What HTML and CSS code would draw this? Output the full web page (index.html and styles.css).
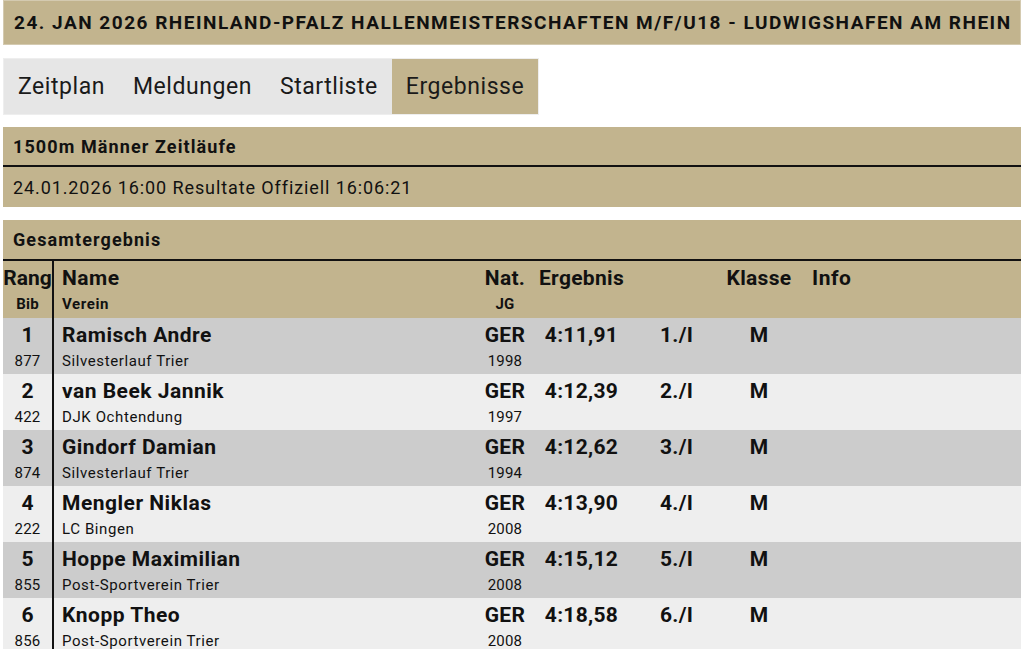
FILE: index.html
```html
<!DOCTYPE html>
<html lang="de">
<head>
<meta charset="utf-8">
<title>Ergebnisse</title>
<link rel="stylesheet" href="styles.css">
</head>
<body>
<div class="page">
  <header class="title">24. JAN 2026 RHEINLAND-PFALZ HALLENMEISTERSCHAFTEN M/F/U18 - LUDWIGSHAFEN AM RHEIN</header>
  <nav class="tabs">
    <a class="tab">Zeitplan</a>
    <a class="tab">Meldungen</a>
    <a class="tab">Startliste</a>
    <a class="tab active">Ergebnisse</a>
  </nav>
  <section class="event">
    <div class="event-name">1500m Männer Zeitläufe</div>
    <div class="event-info">24.01.2026 16:00 Resultate Offiziell 16:06:21</div>
  </section>
  <section class="results">
    <div class="results-title">Gesamtergebnis</div>
    <div class="row head">
      <div class="c rang"><span class="l1">Rang</span><span class="l2">Bib</span></div>
      <div class="c name"><span class="l1">Name</span><span class="l2">Verein</span></div>
      <div class="c nat"><span class="l1">Nat.</span><span class="l2">JG</span></div>
      <div class="c res"><span class="l1">Ergebnis</span></div>
      <div class="c place"></div>
      <div class="c kl"><span class="l1">Klasse</span></div>
      <div class="c info"><span class="l1">Info</span></div>
    </div>
    <div class="row odd">
      <div class="c rang"><span class="l1">1</span><span class="l2">877</span></div>
      <div class="c name"><span class="l1">Ramisch Andre</span><span class="l2">Silvesterlauf Trier</span></div>
      <div class="c nat"><span class="l1">GER</span><span class="l2">1998</span></div>
      <div class="c res"><span class="l1">4:11,91</span></div>
      <div class="c place"><span class="l1">1./I</span></div>
      <div class="c kl"><span class="l1">M</span></div>
      <div class="c info"></div>
    </div>
    <div class="row even">
      <div class="c rang"><span class="l1">2</span><span class="l2">422</span></div>
      <div class="c name"><span class="l1">van Beek Jannik</span><span class="l2">DJK Ochtendung</span></div>
      <div class="c nat"><span class="l1">GER</span><span class="l2">1997</span></div>
      <div class="c res"><span class="l1">4:12,39</span></div>
      <div class="c place"><span class="l1">2./I</span></div>
      <div class="c kl"><span class="l1">M</span></div>
      <div class="c info"></div>
    </div>
    <div class="row odd">
      <div class="c rang"><span class="l1">3</span><span class="l2">874</span></div>
      <div class="c name"><span class="l1">Gindorf Damian</span><span class="l2">Silvesterlauf Trier</span></div>
      <div class="c nat"><span class="l1">GER</span><span class="l2">1994</span></div>
      <div class="c res"><span class="l1">4:12,62</span></div>
      <div class="c place"><span class="l1">3./I</span></div>
      <div class="c kl"><span class="l1">M</span></div>
      <div class="c info"></div>
    </div>
    <div class="row even">
      <div class="c rang"><span class="l1">4</span><span class="l2">222</span></div>
      <div class="c name"><span class="l1">Mengler Niklas</span><span class="l2">LC Bingen</span></div>
      <div class="c nat"><span class="l1">GER</span><span class="l2">2008</span></div>
      <div class="c res"><span class="l1">4:13,90</span></div>
      <div class="c place"><span class="l1">4./I</span></div>
      <div class="c kl"><span class="l1">M</span></div>
      <div class="c info"></div>
    </div>
    <div class="row odd">
      <div class="c rang"><span class="l1">5</span><span class="l2">855</span></div>
      <div class="c name"><span class="l1">Hoppe Maximilian</span><span class="l2">Post-Sportverein Trier</span></div>
      <div class="c nat"><span class="l1">GER</span><span class="l2">2008</span></div>
      <div class="c res"><span class="l1">4:15,12</span></div>
      <div class="c place"><span class="l1">5./I</span></div>
      <div class="c kl"><span class="l1">M</span></div>
      <div class="c info"></div>
    </div>
    <div class="row even">
      <div class="c rang"><span class="l1">6</span><span class="l2">856</span></div>
      <div class="c name"><span class="l1">Knopp Theo</span><span class="l2">Post-Sportverein Trier</span></div>
      <div class="c nat"><span class="l1">GER</span><span class="l2">2008</span></div>
      <div class="c res"><span class="l1">4:18,58</span></div>
      <div class="c place"><span class="l1">6./I</span></div>
      <div class="c kl"><span class="l1">M</span></div>
      <div class="c info"></div>
    </div>
  </section>
</div>
</body>
</html>
```

FILE: styles.css
```css
html, body {
  margin: 0;
  padding: 0;
  background: #ffffff;
}
body {
  font-family: Roboto, "Liberation Sans", sans-serif;
  color: #111111;
}
.page {
  padding: 0 3px;
  display: flex;
  flex-direction: column;
}
.title {
  background: #c2b48e;
  height: 45px;
  display: flex;
  align-items: center;
  padding-left: 10px;
  font-weight: 700;
  font-size: 19px;
  letter-spacing: 1.5px;
  box-sizing: border-box;
  border: 1px solid #d4cab0;
  white-space: nowrap;
}
.tabs {
  margin-top: 13px;
  display: flex;
  align-self: flex-start;
  background: #e6e6e6;
  border: 1px solid #eeeeee;
  height: 57px;
  box-sizing: border-box;
}
.tab {
  display: flex;
  align-items: center;
  padding: 0 14px;
  font-size: 23px;
  letter-spacing: 0.55px;
  color: #1a1a1a;
}
.tab.active {
  background: #c2b48e;
}
.event {
  margin-top: 12px;
  background: #c2b48e;
}
.event-name {
  height: 38px;
  display: flex;
  align-items: center;
  padding-left: 10px;
  font-weight: 700;
  font-size: 18px;
  letter-spacing: 1.1px;
  border-bottom: 2px solid #111;
}
.event-info {
  height: 40px;
  display: flex;
  align-items: center;
  padding-left: 10px;
  font-size: 18px;
  letter-spacing: 0.9px;
}
.results {
  margin-top: 13px;
}
.results-title {
  background: #c2b48e;
  height: 39px;
  display: flex;
  align-items: center;
  padding-left: 10px;
  font-weight: 700;
  font-size: 18px;
  letter-spacing: 1.1px;
  border-bottom: 2px solid #111;
}
.row {
  display: grid;
  grid-template-columns: 51px 426px 50px 103px 88px 76px 1fr;
  height: 56px;
}
.row.head {
  background: #c2b48e;
  height: 57px;
}
.row.odd { background: #cccccc; }
.row.even { background: #eeeeee; }
.c {
  display: flex;
  flex-direction: column;
  align-items: center;
}
.l1 {
  height: 31px;
  line-height: 34px;
  font-size: 21px;
  font-weight: 700;
  letter-spacing: 0.5px;
}
.l2 {
  height: 25px;
  line-height: 25px;
  font-size: 15px;
  letter-spacing: 0.6px;
}
.head .l2 { font-weight: 700; }
.rang {
  border-right: 2px solid #111;
}
.rang .l1 { letter-spacing: 0; }
.rang .l2 { letter-spacing: 0.2px; }
.name {
  align-items: flex-start;
  padding-left: 8px;
}
.nat .l1, .res .l1, .kl .l1, .place .l1 { letter-spacing: 0.3px; }
.nat .l2 { letter-spacing: 0.2px; }
.place {
  align-items: flex-start;
  padding-left: 27px;
}
.info {
  align-items: flex-start;
  padding-left: 15px;
}
```
